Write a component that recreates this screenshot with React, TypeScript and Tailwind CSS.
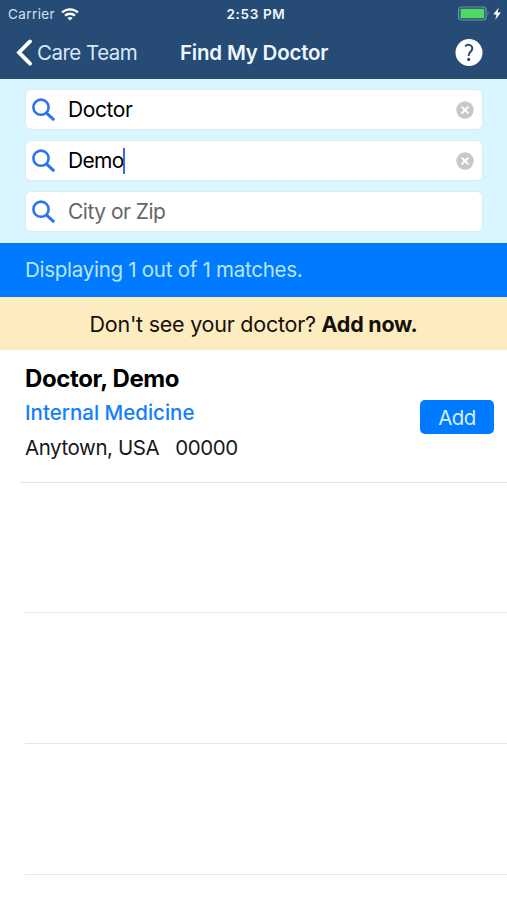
import React from "react";

function SearchIcon() {
  return (
    <svg className="ml-[6px] h-6 w-6 shrink-0" viewBox="0 0 24 24" fill="none" stroke="#2b74f0">
      <circle cx="9" cy="9.2" r="7.6" strokeWidth="2.6" />
      <path d="M14.4 14.8L22.2 22.2" strokeWidth="3" />
    </svg>
  );
}

function ClearIcon() {
  return (
    <svg className="mr-[8px] ml-auto h-[18px] w-[18px]" viewBox="0 0 18 18">
      <circle cx="9" cy="9" r="8.7" fill="#c8c8c8" />
      <path d="M5.6 5.6l6.8 6.8M12.4 5.6l-6.8 6.8" stroke="#fff" strokeWidth="2" />
    </svg>
  );
}

function Field({ children, clear }: { children: React.ReactNode; clear?: boolean }) {
  return (
    <div className="flex h-[41px] items-center rounded-[6px] border border-[#d8ebf2] bg-white">
      <SearchIcon />
      <div className="ml-[12px] flex items-center text-[21px] leading-[26px]">{children}</div>
      {clear && <ClearIcon />}
    </div>
  );
}

export default function App() {
  return (
    <div className="flex h-[900px] w-[507px] flex-col overflow-hidden bg-white font-['Inter','Liberation_Sans',sans-serif] text-black">
      <header className="h-[79px] shrink-0 bg-[#264b75] text-[#eef6ff]">
        <div className="grid h-[28px] grid-cols-3 items-center">
          <div className="flex items-center pl-[8px]">
            <span className="text-[13.5px] tracking-[0.4px] text-[#d3e0ef]">Carrier</span>
            <svg className="ml-[6px] h-[13px] w-[18px]" viewBox="0 0 18 13" fill="none" stroke="#fff" strokeWidth="2.3">
              <path d="M1 4.5C5.5 .2 12.5 .2 17 4.5" />
              <path d="M4 7.7c2.8-2.6 7.2-2.6 10 0" />
              <path d="M6.4 9.9c1.5-1.3 3.7-1.3 5.2 0L9 12.6z" fill="#fff" stroke="none" />
            </svg>
          </div>
          <div className="pl-[5px] text-center text-[13.5px] font-semibold tracking-[0.65px]">2:53 PM</div>
          <div className="flex items-center justify-end pr-[5px]">
            <svg className="h-[16px] w-[45px]" viewBox="0 0 45 16">
              <rect x="1.6" y="1" width="27.5" height="13" rx="3" fill="none" stroke="#7790ab" strokeWidth="1.2" />
              <rect x="3.5" y="2.8" width="23.8" height="9.4" rx="1" fill="#4cd964" />
              <path d="M30.6 5.3q2 2.2 0 4.4z" fill="#7790ab" />
              <path d="M41.8 1.5L36.2 8.5h3.3l-1.2 5.2L43.9 6.5h-3.4z" fill="#fff" />
            </svg>
          </div>
        </div>
        <div className="flex h-[49px] items-center">
          <svg className="ml-[15px] h-[28px] w-[18px]" viewBox="0 0 18 28" fill="none" stroke="#fff" strokeWidth="3.8" strokeLinecap="round">
            <path d="M15 2.4L4 13.4l11 11.3" />
          </svg>
          <span className="ml-[4px] w-[143px] pt-[2px] text-[20.5px] tracking-[-0.5px] text-[#d9e8f8]">Care Team</span>
          <h1 className="pt-[2px] text-[20.5px] font-semibold tracking-[-0.2px] whitespace-nowrap">Find My Doctor</h1>
          <svg className="mr-[24px] ml-auto h-[28px] w-[28px]" viewBox="0 0.8 28 28">
            <circle cx="14" cy="14.3" r="13.5" fill="#fff" />
            <path d="M10.2 8.2c1.2-1.3 3.2-1.9 4.8-1.3 2.6.9 3 4 1.2 5.9-1.5 1.6-2.7 2.2-2.6 4.9" fill="none" stroke="#264b75" strokeWidth="2" />
            <circle cx="13.7" cy="21.2" r="1.6" fill="#264b75" />
          </svg>
        </div>
      </header>

      <section className="flex h-[164px] shrink-0 flex-col gap-[10px] bg-[#d9f6ff] pt-[10px] pr-[24px] pl-[25px]">
        <Field clear>
          <span className="tracking-[-0.4px]">Doctor</span>
        </Field>
        <Field clear>
          <span className="tracking-[-0.65px]">Demo</span>
          <span className="-ml-[1px] h-[26px] w-[2px] bg-[#3f69d8]" />
        </Field>
        <Field>
          <span className="tracking-[-0.5px] text-[#666]">City or Zip</span>
        </Field>
      </section>

      <div className="flex h-[54px] shrink-0 items-center bg-[#007aff] pt-px pl-[25px] text-[20.5px] text-[#b9e5ff]">
        <span className="tracking-[-0.27px]">Displaying 1 out of 1 matches.</span>
      </div>
      <div className="flex h-[53px] shrink-0 items-center justify-center bg-[#feecc1] pt-[2px] text-[21.5px] text-[#15110a]">
        <span className="tracking-[-0.25px] whitespace-pre">
          Don't see your doctor? <b className="font-bold">Add now.</b>
        </span>
      </div>

      <main className="flex flex-col">
        <article className="flex h-[132px] justify-between pr-[13px] pl-[25px]">
          <div className="pt-[14px]">
            <h2 className="text-[24px] leading-[30px] font-bold tracking-[-0.4px]">Doctor, Demo</h2>
            <p className="mt-[4px] text-[20.5px] leading-[30px] font-medium text-[#147efb]">Internal Medicine</p>
            <p className="mt-[5px] text-[20.5px] leading-[30px] tracking-[-0.43px] whitespace-pre text-[#181818]">{"Anytown, USA   00000"}</p>
          </div>
          <button className="mt-[50px] h-[34px] w-[74px] rounded-[5px] bg-[#007aff] pt-[2px] text-[20.5px] tracking-[-0.5px] text-[#d5eeff]">Add</button>
        </article>
        <div className="ml-[20px] h-px bg-[#e2e2e2]" />
        <div className="ml-[25px] h-[130px] border-b border-[#e6e6e6]" />
        <div className="ml-[25px] h-[131px] border-b border-[#e6e6e6]" />
        <div className="ml-[25px] h-[131px] border-b border-[#e6e6e6]" />
      </main>
    </div>
  );
}
